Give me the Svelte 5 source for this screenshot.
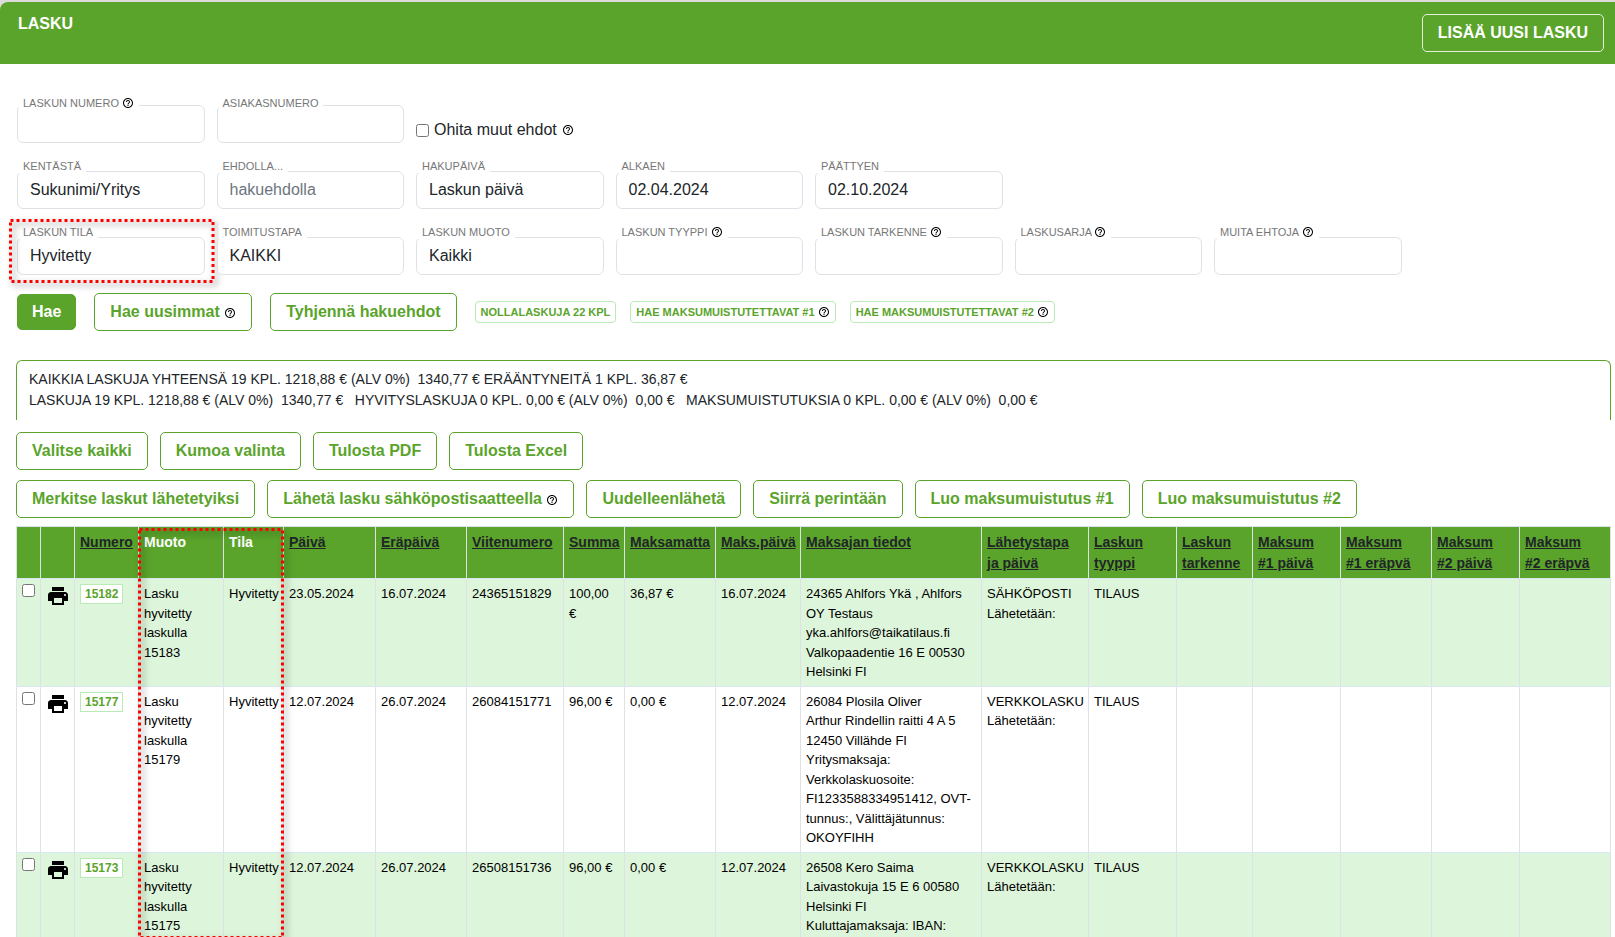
<script>
  let filters = $state({
    number: '',
    customer: '',
    skipOthers: false,
    field: 'Sukunimi/Yritys',
    term: '',
    dateType: 'Laskun päivä',
    from: '02.04.2024',
    to: '02.10.2024',
    status: 'Hyvitetty',
    delivery: 'KAIKKI',
    format: 'Kaikki',
    type: '',
    detail: '',
    series: '',
    other: ''
  });

  let selected = $state([]);

  const searchRows = [
    [
      { key: 'field', label: 'KENTÄSTÄ', options: ['Sukunimi/Yritys'] },
      { key: 'term', label: 'EHDOLLA...', placeholder: 'hakuehdolla' },
      { key: 'dateType', label: 'HAKUPÄIVÄ', options: ['Laskun päivä'] },
      { key: 'from', label: 'ALKAEN' },
      { key: 'to', label: 'PÄÄTTYEN' }
    ],
    [
      { key: 'status', label: 'LASKUN TILA', options: ['Hyvitetty'], marked: true },
      { key: 'delivery', label: 'TOIMITUSTAPA', options: ['KAIKKI'] },
      { key: 'format', label: 'LASKUN MUOTO', options: ['Kaikki'] },
      { key: 'type', label: 'LASKUN TYYPPI', help: true },
      { key: 'detail', label: 'LASKUN TARKENNE', help: true },
      { key: 'series', label: 'LASKUSARJA', help: true },
      { key: 'other', label: 'MUITA EHTOJA', help: true }
    ]
  ];

  const columns = [
    { width: 24 },
    { width: 34 },
    { title: 'Numero', width: 64 },
    { title: 'Muoto', width: 85, plain: true },
    { title: 'Tila', width: 60, plain: true },
    { title: 'Päivä', width: 92 },
    { title: 'Eräpäivä', width: 91 },
    { title: 'Viitenumero', width: 97 },
    { title: 'Summa', width: 61 },
    { title: 'Maksamatta', width: 91 },
    { title: 'Maks.päivä', width: 85 },
    { title: 'Maksajan tiedot', width: 181 },
    { title: 'Lähetystapa ja päivä', width: 107 },
    { title: 'Laskun tyyppi', width: 88 },
    { title: 'Laskun tarkenne', width: 76 },
    { title: 'Maksum #1\u00a0päivä', width: 88 },
    { title: 'Maksum #1\u00a0eräpvä', width: 91 },
    { title: 'Maksum #2\u00a0päivä', width: 88 },
    { title: 'Maksum #2\u00a0eräpvä', width: 91 }
  ];

  const totalWidth = columns.reduce((sum, c) => sum + c.width, 0);

  const invoices = [
    {
      number: '15182',
      format: 'Lasku hyvitetty laskulla 15183',
      status: 'Hyvitetty',
      date: '23.05.2024',
      due: '16.07.2024',
      reference: '24365151829',
      sum: '100,00 €',
      unpaid: '36,87 €',
      paid: '16.07.2024',
      payer: ['24365 Ahlfors Ykä , Ahlfors OY Testaus', 'yka.ahlfors@taikatilaus.fi', 'Valkopaadentie 16 E 00530 Helsinki FI'],
      delivery: 'SÄHKÖPOSTI',
      type: 'TILAUS'
    },
    {
      number: '15177',
      format: 'Lasku hyvitetty laskulla 15179',
      status: 'Hyvitetty',
      date: '12.07.2024',
      due: '26.07.2024',
      reference: '26084151771',
      sum: '96,00 €',
      unpaid: '0,00 €',
      paid: '12.07.2024',
      payer: ['26084 Plosila Oliver', 'Arthur Rindellin raitti 4 A 5', '12450 Villähde FI', 'Yritysmaksaja: Verkkolaskuosoite: FI1233588334951412, OVT-tunnus:, Välittäjätunnus: OKOYFIHH'],
      delivery: 'VERKKOLASKU',
      type: 'TILAUS'
    },
    {
      number: '15173',
      format: 'Lasku hyvitetty laskulla 15175',
      status: 'Hyvitetty',
      date: '12.07.2024',
      due: '26.07.2024',
      reference: '26508151736',
      sum: '96,00 €',
      unpaid: '0,00 €',
      paid: '12.07.2024',
      payer: ['26508 Kero Saima', 'Laivastokuja 15 E 6 00580 Helsinki FI', 'Kuluttajamaksaja: IBAN:'],
      delivery: 'VERKKOLASKU',
      type: 'TILAUS'
    }
  ];

  function selectAll() {
    selected = invoices.map((i) => i.number);
  }

  function clearSelection() {
    selected = [];
  }

  function clearFilters() {
    filters.number = '';
    filters.customer = '';
    filters.term = '';
    filters.from = '';
    filters.to = '';
  }
</script>

{#snippet help()}
  <svg class="help" viewBox="0 0 24 24" aria-hidden="true">
    <path d="M11 18h2v-2h-2v2zm1-16C6.48 2 2 6.48 2 12s4.48 10 10 10 10-4.48 10-10S17.52 2 12 2zm0 18c-4.41 0-8-3.59-8-8s3.59-8 8-8 8 3.59 8 8-3.59 8-8 8zm0-14c-2.21 0-4 1.79-4 4h2c0-1.1.9-2 2-2s2 .9 2 2c0 2-3 1.75-3 5h2c0-2.25 3-2.5 3-5 0-2.21-1.79-4-4-4z" />
  </svg>
{/snippet}

{#snippet marker(name)}
  <svg class="marker {name}" aria-hidden="true">
    <rect x="1.5" y="1.5" width="100%" height="100%" />
  </svg>
{/snippet}

<div class="page">
  <div class="top">
    <header>
      <h1>LASKU</h1>
      <button class="btn btn-header">LISÄÄ UUSI LASKU</button>
    </header>
  </div>

  <form class="search" onsubmit={(e) => e.preventDefault()}>
    <div class="row row-first">
      <div class="field">
        <label for="number">LASKUN NUMERO {@render help()}</label>
        <input id="number" type="text" bind:value={filters.number} />
      </div>
      <div class="field">
        <label for="customer">ASIAKASNUMERO</label>
        <input id="customer" type="text" bind:value={filters.customer} />
      </div>
      <label class="check">
        <input type="checkbox" bind:checked={filters.skipOthers} />
        <span>Ohita muut ehdot</span>
        {@render help()}
      </label>
    </div>

    {#each searchRows as row}
      <div class="row">
        {#each row as f}
          <div class="field">
            <label for={f.key}>{f.label} {#if f.help}{@render help()}{/if}</label>
            {#if f.options}
              <select id={f.key} bind:value={filters[f.key]}>
                {#each f.options as option}
                  <option>{option}</option>
                {/each}
              </select>
            {:else}
              <input id={f.key} type="text" placeholder={f.placeholder} bind:value={filters[f.key]} />
            {/if}
            {#if f.marked}
              {@render marker('marker-field')}
            {/if}
          </div>
        {/each}
      </div>
    {/each}

    <div class="actions">
      <button class="btn btn-primary">Hae</button>
      <button class="btn" type="button">Hae uusimmat {@render help()}</button>
      <button class="btn" type="button" onclick={clearFilters}>Tyhjennä hakuehdot</button>
      <div class="small-actions">
        <button class="btn-small" type="button">NOLLALASKUJA 22 KPL</button>
        <button class="btn-small" type="button">HAE MAKSUMUISTUTETTAVAT #1 {@render help()}</button>
        <button class="btn-small" type="button">HAE MAKSUMUISTUTETTAVAT #2 {@render help()}</button>
      </div>
    </div>
  </form>

  <main>
    <div class="summary">
      KAIKKIA LASKUJA YHTEENSÄ 19 KPL. 1218,88 € (ALV 0%)&nbsp; 1340,77 € ERÄÄNTYNEITÄ 1 KPL. 36,87 €<br />
      LASKUJA 19 KPL. 1218,88 € (ALV 0%)&nbsp; 1340,77 €&nbsp;&nbsp; HYVITYSLASKUJA 0 KPL. 0,00 € (ALV 0%)&nbsp; 0,00 €&nbsp;&nbsp; MAKSUMUISTUTUKSIA 0 KPL. 0,00 € (ALV 0%)&nbsp; 0,00 €
    </div>

    <div class="tools">
      <button class="btn" onclick={selectAll}>Valitse kaikki</button>
      <button class="btn" onclick={clearSelection}>Kumoa valinta</button>
      <button class="btn">Tulosta PDF</button>
      <button class="btn">Tulosta Excel</button>
    </div>
    <div class="tools">
      <button class="btn">Merkitse laskut lähetetyiksi</button>
      <button class="btn">Lähetä lasku sähköpostisaatteella {@render help()}</button>
      <button class="btn">Uudelleenlähetä</button>
      <button class="btn">Siirrä perintään</button>
      <button class="btn">Luo maksumuistutus #1</button>
      <button class="btn">Luo maksumuistutus #2</button>
    </div>

    <div class="table-wrap">
      <table>
        <colgroup>
          {#each columns as c}
            <col style="width: {(c.width / totalWidth) * 100}%" />
          {/each}
        </colgroup>
        <thead>
          <tr>
            {#each columns as c}
              <th>
                {#if c.plain}
                  {c.title}
                {:else if c.title}
                  <a href="#sort">{c.title}</a>
                {/if}
              </th>
            {/each}
          </tr>
        </thead>
        <tbody>
          {#each invoices as inv}
            <tr>
              <td><input type="checkbox" aria-label="Valitse {inv.number}" value={inv.number} bind:group={selected} /></td>
              <td>
                <svg class="print" viewBox="0 0 24 24" aria-hidden="true">
                  <path d="M19 8H5c-1.66 0-3 1.34-3 3v6h4v4h12v-4h4v-6c0-1.66-1.34-3-3-3zm-3 11H8v-5h8v5zm3-7c-.55 0-1-.45-1-1s.45-1 1-1 1 .45 1 1-.45 1-1 1zm-1-9H6v4h12V3z" />
                </svg>
              </td>
              <td><a class="number" href="#{inv.number}">{inv.number}</a></td>
              <td>{inv.format}</td>
              <td>{inv.status}</td>
              <td>{inv.date}</td>
              <td>{inv.due}</td>
              <td>{inv.reference}</td>
              <td>{inv.sum}</td>
              <td>{inv.unpaid}</td>
              <td>{inv.paid}</td>
              <td>
                {#each inv.payer as line}
                  <div>{line}</div>
                {/each}
              </td>
              <td>
                <div>{inv.delivery}</div>
                <div>Lähetetään:</div>
              </td>
              <td>{inv.type}</td>
              <td></td>
              <td></td>
              <td></td>
              <td></td>
              <td></td>
            </tr>
          {/each}
        </tbody>
      </table>
      {@render marker('marker-columns')}
    </div>
  </main>
</div>

<style>
  :global(body) {
    margin: 0;
    background: #fff;
  }

  .page {
    display: flex;
    flex-direction: column;
    height: 100vh;
    overflow: hidden;
    font-family: "Liberation Sans", Arial, sans-serif;
    font-size: 16px;
    line-height: 24px;
    color: #212529;
  }

  .top {
    padding-top: 2px;
    background: #dcdcdc;
  }

  header {
    display: flex;
    justify-content: space-between;
    align-items: flex-start;
    padding: 12px 11px 12px 18px;
    background: #5aa42b;
    border-top-left-radius: 8px;
  }

  h1 {
    margin: 0;
    font-size: 16px;
    line-height: 20px;
    color: #fff;
  }

  button,
  input,
  select {
    font-family: inherit;
    box-sizing: border-box;
  }

  .btn {
    height: 38px;
    padding: 0 15px;
    border: 1px solid #5aa42b;
    border-radius: 5px;
    background: #fff;
    color: #5aa42b;
    font-size: 16px;
    font-weight: bold;
    white-space: nowrap;
    cursor: pointer;
  }

  .btn-header {
    border-color: #e4f2dc;
    background: #5aa42b;
    color: #fff;
  }

  .btn-primary {
    height: 36px;
    padding: 0 14px;
    background: #5aa42b;
    color: #fff;
  }

  .help {
    width: 12px;
    height: 12px;
    vertical-align: -2px;
    fill: #000;
  }

  .search {
    display: flex;
    flex-direction: column;
    gap: 16px;
    padding: 32px 14px 29px 17px;
  }

  .row {
    display: grid;
    grid-template-columns: repeat(8, 1fr);
    column-gap: 12px;
  }

  .field {
    position: relative;
    display: flex;
    flex-direction: column;
    min-width: 0;
  }

  .field label {
    position: relative;
    align-self: flex-start;
    height: 14px;
    margin: 0 0 -2px 2px;
    padding: 0 5px 0 4px;
    background: #fff;
    color: #777;
    font-size: 11px;
    line-height: 14px;
    white-space: nowrap;
  }

  .row-first .field label {
    margin-bottom: -5px;
  }

  .field input,
  .field select {
    appearance: none;
    width: 100%;
    height: 38px;
    padding: 0 12px;
    border: 1px solid #dee2e6;
    border-radius: 6px;
    background: #fff;
    color: #212529;
    font-size: 16px;
  }

  .field select {
    padding-bottom: 2px;
  }

  .field input::placeholder {
    color: #6c757d;
    opacity: 1;
  }

  .check {
    display: flex;
    align-items: center;
    align-self: end;
    gap: 5px;
    padding-bottom: 1px;
    white-space: nowrap;
  }

  .check input {
    margin: 0;
  }

  .actions {
    display: flex;
    align-items: center;
    gap: 18px;
    padding-top: 2px;
  }

  .small-actions {
    display: flex;
    align-items: center;
    gap: 14px;
  }

  .btn-small {
    height: 22px;
    padding: 0 5px;
    border: 1px solid #b9ebb4;
    border-radius: 4px;
    background: #fff;
    color: #5aa42b;
    font-size: 11px;
    font-weight: bold;
    white-space: nowrap;
    cursor: pointer;
  }

  main {
    display: flex;
    flex: 1;
    flex-direction: column;
    min-height: 0;
    padding: 0 4px 0 16px;
  }

  .summary {
    margin-bottom: 12px;
    padding: 8px 12px 9px;
    border: 1px solid #5aa42b;
    border-bottom: none;
    border-radius: 6px 6px 0 0;
    font-size: 14px;
    line-height: 21px;
  }

  .tools {
    display: flex;
    gap: 12px;
    margin-bottom: 10px;
  }

  .tools + .tools {
    margin-bottom: 8px;
  }

  .table-wrap {
    position: relative;
    flex: 1;
    min-height: 0;
  }

  table {
    width: 100%;
    table-layout: fixed;
    border-collapse: collapse;
    font-size: 13px;
    line-height: 1.5;
    color: #000;
  }

  th,
  td {
    padding: 5px 5px 4px;
    border: 1px solid #dee2e6;
    text-align: left;
    vertical-align: top;
  }

  th {
    height: 42px;
    border-bottom: none;
    background: #5aa42b;
    color: #fff;
    font-size: 14px;
  }

  th a {
    color: #212529;
  }

  td {
    border-top-color: #d5e8f3;
    border-bottom-color: #d5e8f3;
  }

  tbody tr:nth-child(odd) {
    background: #ddf5da;
  }

  td input {
    display: block;
    margin: 0;
  }

  .print {
    display: block;
    width: 24px;
    height: 24px;
  }

  .number {
    display: inline-block;
    padding: 0 4px;
    border: 1px solid #b9ebb4;
    background: #fff;
    color: #5aa42b;
    font-size: 12px;
    font-weight: bold;
    text-decoration: none;
  }

  /* dotted red frames that point out the status filter and the matching columns */
  .marker {
    position: absolute;
    overflow: visible;
    pointer-events: none;
    filter: drop-shadow(3px 3px 3px rgba(0, 0, 0, 0.5));
  }

  .marker rect {
    fill: none;
    stroke: #f00;
    stroke-width: 3px;
    stroke-dasharray: 3 3;
  }

  .marker-field {
    top: -6px;
    left: -8px;
    width: calc(100% + 15px);
    height: calc(100% + 11px);
  }

  .marker-columns {
    top: 2px;
    left: 122px;
    width: 143px;
    height: calc(100% - 3px);
  }
</style>
